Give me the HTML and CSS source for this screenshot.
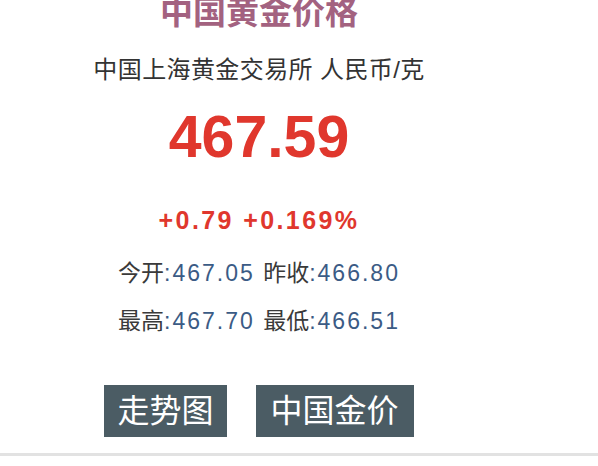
FILE: index.html
```html
<!DOCTYPE html>
<html lang="zh-CN">
<head>
<meta charset="utf-8">
<title>中国黄金价格</title>
<link rel="stylesheet" href="styles.css">
</head>
<body>
<div class="panel">
  <h1 class="title">中国黄金价格</h1>
  <p class="subtitle">中国上海黄金交易所 人民币/克</p>
  <p class="price">467.59</p>
  <p class="change">+0.79 +0.169%</p>
  <p class="row"><span class="label">今开</span><span class="val">:467.05 </span><span class="label">昨收</span><span class="val">:466.80</span></p>
  <p class="row row2"><span class="label">最高</span><span class="val">:467.70 </span><span class="label">最低</span><span class="val">:466.51</span></p>
  <div class="buttons">
    <a class="btn">走势图</a>
    <a class="btn">中国金价</a>
  </div>
</div>
<div class="divider"></div>
</body>
</html>
```

FILE: styles.css
```css
html, body {
  margin: 0;
  padding: 0;
  background: #ffffff;
  overflow: hidden;
}
body {
  font-family: "Liberation Sans", "Noto Sans CJK SC", sans-serif;
  color: #333333;
}
.panel {
  width: 518px;
  text-align: center;
}
.title {
  margin: -7px 0 0;
  font-size: 33px;
  line-height: 40px;
  font-weight: 700;
  color: #a36280;
}
.subtitle {
  margin: 21px 0 0;
  font-size: 24px;
  line-height: 32px;
  letter-spacing: 0.4px;
  color: #333333;
}
.price {
  margin: 19px 0 0;
  font-size: 59px;
  line-height: 64px;
  font-weight: 700;
  color: #e0372d;
}
.change {
  margin: 36px 0 0;
  font-size: 25px;
  line-height: 30px;
  font-weight: 700;
  letter-spacing: 2.4px;
  color: #e0372d;
}
.row {
  margin: 22px 0 0;
  font-size: 23px;
  line-height: 32px;
}
.row2 {
  margin-top: 16px;
}
.label {
  color: #3a3a3a;
}
.val {
  color: #3b5b85;
  letter-spacing: 2px;
}
.buttons {
  margin-top: 48px;
  display: flex;
  justify-content: center;
  gap: 29px;
}
.btn {
  display: block;
  height: 52px;
  line-height: 52px;
  padding: 0 13px;
  background: #4b5c64;
  color: #ffffff;
  font-size: 32px;
}
.btn + .btn {
  padding: 0 15px;
}
.divider {
  margin-top: 16px;
  height: 3px;
  background: #e2e2e2;
}
```
